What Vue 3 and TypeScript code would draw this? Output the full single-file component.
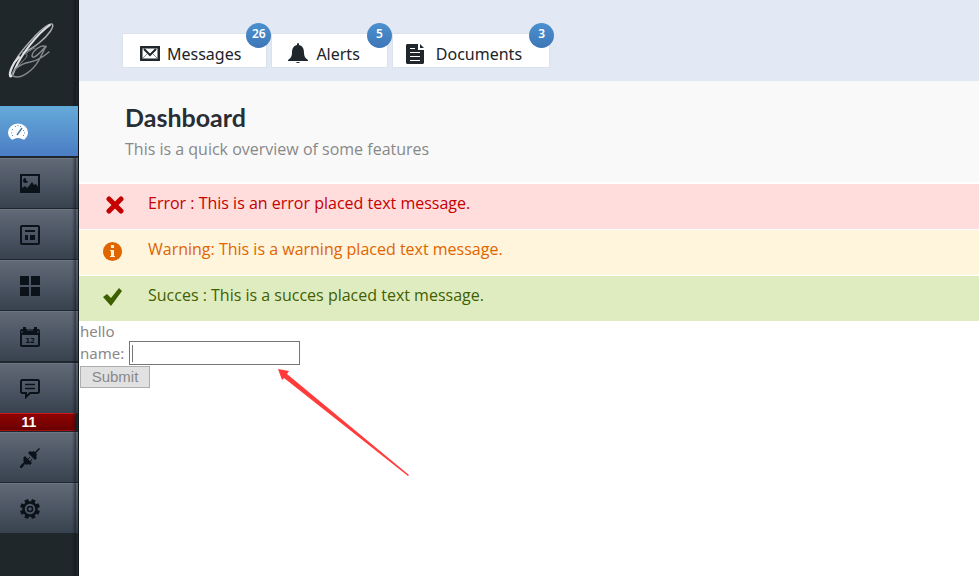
<script setup lang="ts">
import { ref } from 'vue'

interface TopLink {
  id: 'messages' | 'alerts' | 'documents'
  label: string
  count: number
}

interface Notice {
  kind: 'error' | 'warning' | 'success'
  text: string
}

interface SideLink {
  id: string
  title: string
  count?: number
}

const topLinks: TopLink[] = [
  { id: 'messages', label: 'Messages', count: 26 },
  { id: 'alerts', label: 'Alerts', count: 5 },
  { id: 'documents', label: 'Documents', count: 3 },
]

const notices: Notice[] = [
  { kind: 'error', text: 'Error : This is an error placed text message.' },
  { kind: 'warning', text: 'Warning: This is a warning placed text message.' },
  { kind: 'success', text: 'Succes : This is a succes placed text message.' },
]

const sideLinks: SideLink[] = [
  { id: 'dashboard', title: 'Dashboard' },
  { id: 'gallery', title: 'Gallery' },
  { id: 'layout', title: 'Layout' },
  { id: 'grid', title: 'Grid' },
  { id: 'calendar', title: 'Calendar' },
  { id: 'comments', title: 'Comments', count: 11 },
  { id: 'plugins', title: 'Plugins' },
  { id: 'settings', title: 'Settings' },
]

const active = ref('dashboard')
const name = ref('')
const teeth = [0, 45, 90, 135, 180, 225, 270, 315]
</script>

<template>
  <div class="page">
    <aside class="sidebar">
      <a class="logo" href="#" aria-label="Home">
        <svg width="48" height="58" viewBox="0 0 48 58" fill="none" stroke-linecap="round" stroke-linejoin="round">
          <path d="M2 54C3 41 14 28 28 13C35 6 41 1 44 2C47 4 41 13 31 21C25 26 19 29 15 31" stroke="#a9adaf" stroke-width="1.500" />
          <path d="M42 3C29 12 13 33 7 47C5 52 3 56 2 54C1 51 4 42 11 35" stroke="#dfe1e2" stroke-width="2" />
          <path d="M17 32C22 29 25 26 27 26M18 32C23 33 12 41 8 46" stroke="#8b9093" stroke-width="1" />
          <path d="M38 25C33 21 24 30 24 34C25 38 32 31 38 24L31 38C25 49 12 58 5 54C2 51 10 42 22 40C32 38 36 34 41 30" stroke="#84898c" stroke-width="1.500" />
        </svg>
      </a>
      <nav class="side-nav" aria-label="Main">
        <a
          v-for="item in sideLinks"
          :key="item.id"
          href="#"
          class="side-link"
          :class="[item.id, { active: item.id === active }]"
          :aria-label="item.title"
          @click.prevent="active = item.id"
        >
          <span class="side-icon">
            <svg v-if="item.id === 'dashboard'" width="20" height="20" viewBox="0 0 20 20">
              <path d="M3 17A10 9 0 1 1 17 17Q16 18 14 17Q10 15 6 17Q4 18 3 17Z" fill="#fff" />
              <path d="M3 11h1M4 7l1 1M7 4l1 1M10 3v1M13 4l-1 1M17 11h-1M16 8l-1 1M4 14l1-1M16 14l-1-1" stroke="#5b8db9" stroke-width="1" />
              <path d="M9 13L14 6" stroke="#4a7dac" stroke-width="1.500" />
            </svg>
            <svg v-else-if="item.id === 'gallery'" width="20" height="20" viewBox="0 0 20 20">
              <path d="M1 1H19V18H1Z" fill="none" stroke="#0b121a" stroke-width="2" />
              <path d="M2 17V14L5 12L7 14L9 12L12 8L14 11L16 10L18 13V17Z" fill="#0b121a" />
              <path d="M6 4A2.500 2.500 0 1 0 8 7A2 2 0 0 1 6 4Z" fill="#0b121a" />
            </svg>
            <svg v-else-if="item.id === 'layout'" width="20" height="20" viewBox="0 0 20 20">
              <rect x="1" y="1" width="18" height="18" rx="1" fill="none" stroke="#0b121a" stroke-width="2" />
              <path d="M5 5H15V7H5ZM5 10H8V15H5ZM10 10H15V15H10Z" fill="#0b121a" />
            </svg>
            <svg v-else-if="item.id === 'grid'" width="20" height="20" viewBox="0 0 20 20">
              <path d="M0 0H9V9H0ZM11 0H20V9H11ZM0 11H9V20H0ZM11 11H20V20H11Z" fill="#0b121a" />
            </svg>
            <svg v-else-if="item.id === 'calendar'" width="20" height="20" viewBox="0 0 20 20">
              <rect x="1" y="3" width="18" height="16" rx="1" fill="none" stroke="#0b121a" stroke-width="2" />
              <path d="M1 3H19V8H1ZM3 0H6V4H3ZM14 0H17V4H14Z" fill="#0b121a" />
              <path d="M2 4V6M7 3H13M18 4V6" stroke="#485260" stroke-width="1" />
              <text x="10" y="16" text-anchor="middle" class="calendar-day">12</text>
            </svg>
            <svg v-else-if="item.id === 'comments'" width="20" height="20" viewBox="0 0 20 20">
              <path d="M2 1H18L19 2V13L18 14H10L6 18V14H2L1 13V2Z" fill="none" stroke="#0b121a" stroke-width="2" />
              <path d="M5 5.500H15M5 9.500H15" stroke="#0b121a" stroke-width="1.500" />
            </svg>
            <svg v-else-if="item.id === 'plugins'" width="20" height="20" viewBox="0 0 20 20">
              <path d="M0 18L4 14L3 12L4 11L3 10L5 8L12 15L10 17L8 16L7 17L5 16L2 20H0Z" fill="#0b121a" />
              <path d="M8 5L10 3L12 4L13 3L15 4L19 0L20 1L16 5L17 7L16 8L17 10L15 12Z" fill="#0b121a" />
              <path d="M7 12L10 9M10 14L12 11" stroke="#0b121a" stroke-width="1" />
            </svg>
            <svg v-else width="20" height="20" viewBox="0 0 20 20">
              <rect v-for="angle in teeth" :key="angle" x="8" y="0" width="4" height="4" fill="#0b121a" :transform="`rotate(${angle + 22.5} 10 10)`" />
              <circle cx="10" cy="10" r="6.500" fill="none" stroke="#0b121a" stroke-width="2.500" />
              <circle cx="10" cy="10" r="2.500" fill="none" stroke="#0b121a" stroke-width="1.500" />
            </svg>
          </span>
          <span v-if="item.count" class="side-count">{{ item.count }}</span>
        </a>
      </nav>
    </aside>

    <main class="content">
      <header class="topbar">
        <a v-for="link in topLinks" :key="link.id" href="#" class="top-link" :class="link.id">
          <svg v-if="link.id === 'messages'" width="20" height="15" viewBox="0 0 20 15">
            <rect x="1" y="1" width="18" height="13" rx="1" fill="none" stroke="#1f262c" stroke-width="3" />
            <path d="M4 3L10 9L16 3" fill="none" stroke="#1f262c" stroke-width="2" />
            <path d="M3 12L7 8M17 12L13 8" stroke="#8a8f93" stroke-width="1" />
          </svg>
          <svg v-else-if="link.id === 'alerts'" width="20" height="21" viewBox="0 0 20 21">
            <path d="M10 0C11 0 11 1 11 2C15 3 16 6 16 10C16 13 17 15 20 17V18H0V17C3 15 4 13 4 10C4 6 5 3 9 2C9 1 9 0 10 0Z" fill="#1f262c" />
            <path d="M8 19H12Q12 20 10 20Q8 20 8 19Z" fill="#1f262c" />
          </svg>
          <svg v-else width="18" height="20" viewBox="0 0 18 20">
            <path d="M1 0H12V6H18V19L17 20H1L0 19V1Z" fill="#1f262c" />
            <path d="M14 0L18 4H14Z" fill="#1f262c" />
            <path d="M4 4.500H9M4 8.500H14M4 12.500H14M4 16.500H14" stroke="#fff" stroke-width="1" />
          </svg>
          <span>{{ link.label }}</span>
          <span class="badge">{{ link.count }}</span>
        </a>
      </header>

      <section class="heading">
        <h1>Dashboard</h1>
        <p>This is a quick overview of some features</p>
      </section>

      <section class="notices">
        <p v-for="notice in notices" :key="notice.kind" class="notice" :class="notice.kind">
          <span class="notice-icon">
            <svg v-if="notice.kind === 'error'" width="20" height="18" viewBox="0 0 20 18">
              <path d="M4 3L16 15M16 3L4 15" stroke="#c40000" stroke-width="5" stroke-linecap="round" />
            </svg>
            <svg v-else-if="notice.kind === 'warning'" width="19" height="19" viewBox="0 0 19 19">
              <circle cx="9.500" cy="9.500" r="9.500" fill="#e06500" />
              <path d="M8 3H11V6H8ZM7 8H11V14H12V15H7V14H8V9H7Z" fill="#fff3dc" />
            </svg>
            <svg v-else width="19" height="18" viewBox="0 0 19 18">
              <path d="M0 9L4 6L8 10L16 0L19 3L8 18Z" fill="#3f6000" />
            </svg>
          </span>
          <span>{{ notice.text }}</span>
        </p>
      </section>

      <form class="entry" @submit.prevent>
        <div class="greeting">hello</div>
        <div class="field">
          <label for="name">name:</label>
          <input id="name" v-model="name" type="text" />
        </div>
        <button type="submit">Submit</button>
        <svg class="pointer" width="132" height="108" viewBox="0 0 132 108" aria-hidden="true">
          <path d="M0 0L11 2L9 5L131 106L130 107L6 9L4 11Z" fill="#ff3b3b" />
        </svg>
      </form>
    </main>
  </div>
</template>

<style>
body {
  margin: 0;
  background: #fff;
}
</style>

<style scoped>
.page {
  display: flex;
  min-height: 100vh;
  font-family: "Noto Sans", "Open Sans", sans-serif;
  font-size: 15px;
  line-height: 20px;
  color: #888;
}

.sidebar {
  position: relative;
  flex: 0 0 79px;
  box-sizing: border-box;
  border-right: 1px solid #12171b;
  background: #20272b;
}

.sidebar::after {
  content: "";
  position: absolute;
  top: 0;
  right: 0;
  bottom: 0;
  width: 6px;
  background: linear-gradient(90deg, transparent, rgba(10, 15, 20, 0.5) 65%, rgba(10, 15, 20, 0.1) 66%);
  pointer-events: none;
}

.logo {
  display: block;
  height: 84px;
  padding: 22px 0 0 8px;
}

.side-link {
  display: block;
  border-bottom: 1px solid #20262d;
  text-decoration: none;
}

.side-link.dashboard,
.side-link.calendar {
  border-bottom-width: 2px;
}

.side-icon {
  display: flex;
  align-items: center;
  height: 50px;
  padding-left: 20px;
  box-sizing: border-box;
  border-top: 1px solid #6c7582;
  background: linear-gradient(#616977, #38424f);
}

.active {
  position: relative;
  z-index: 1;
}

.active .side-icon {
  padding-left: 8px;
  border-top-color: #5ca9db;
  background: linear-gradient(#64a9d8, #4b7dc4);
}

.side-icon svg {
  display: block;
}

.calendar-day {
  font: bold 7px "DejaVu Sans", sans-serif;
  fill: #0b121a;
}

.side-count {
  display: block;
  height: 18px;
  box-sizing: border-box;
  margin-right: 2px;
  padding-right: 18px;
  border-top: 1px solid #c81a1a;
  border-bottom: 1px solid #a01010;
  background: linear-gradient(#8f0404, #6b0000);
  color: #fff;
  font: bold 14px/16px "Liberation Sans", sans-serif;
  text-align: center;
}

.content {
  flex: 1;
  min-width: 0;
}

.topbar {
  display: flex;
  gap: 4px;
  height: 81px;
  box-sizing: border-box;
  padding: 33px 0 0 43px;
  background: #e2e9f4;
}

.top-link {
  position: relative;
  display: flex;
  align-items: center;
  gap: 7px;
  height: 35px;
  box-sizing: border-box;
  padding: 6px 25px 0 17px;
  border: 1px solid #dbe2ea;
  background: #fff;
  color: #1c2329;
  font-size: 16px;
  text-decoration: none;
}

.alerts {
  gap: 8px;
  padding-right: 27px;
  padding-left: 16px;
}

.documents {
  gap: 12px;
  padding-right: 27px;
  padding-left: 13px;
}

.badge {
  position: absolute;
  top: -11px;
  right: -5px;
  width: 25px;
  height: 25px;
  border-radius: 50%;
  background: linear-gradient(#4c90cf, #3d76b7);
  color: #fff;
  font-size: 12px;
  font-weight: 600;
  line-height: 21px;
  text-align: center;
}

.heading {
  padding: 22px 46px 23px;
  border-bottom: 2px solid #fff;
  background: #f9f9f9;
}

.heading h1 {
  margin: 0 0 8px;
  color: #272e35;
  font-family: Lato, "Noto Sans", sans-serif;
  font-size: 25px;
  font-weight: 700;
  line-height: 28px;
}

.heading p,
.notice {
  margin: 0;
  font-family: "Open Sans", "Noto Sans", sans-serif;
  font-size: 16px;
}

.notices {
  display: grid;
  gap: 1px;
}

.notice {
  display: flex;
  align-items: flex-start;
  height: 45px;
  box-sizing: border-box;
  padding: 9px 24px;
}

.notice-icon {
  flex: 0 0 45px;
  padding-top: 3px;
}

.notice-icon svg {
  display: block;
}

.error {
  background: #ffdddd;
  color: #c40000;
}

.error svg {
  margin-left: 2px;
}

.warning {
  background: #fff4dc;
  color: #e06500;
}

.success {
  background: #dfecc0;
  color: #3f6000;
}

.entry {
  position: relative;
  padding-left: 1px;
}

.field {
  display: flex;
  align-items: center;
  gap: 5px;
}

.field input {
  width: 171px;
  height: 24px;
  box-sizing: border-box;
  padding: 1px 3px;
  border: 1px solid #767676;
  background: linear-gradient(#777, #777) 2px 3px / 1px 17px no-repeat #fff;
  color: #555;
  font: 15px "Liberation Sans", sans-serif;
  outline: none;
}

.entry button {
  display: block;
  width: 70px;
  height: 22px;
  margin-top: 1px;
  padding: 0;
  border: 1px solid #adadad;
  background: #e1e1e1;
  color: #888;
  font: 15px/20px "Liberation Sans", sans-serif;
}

.pointer {
  position: absolute;
  top: 48px;
  left: 199px;
}
</style>
